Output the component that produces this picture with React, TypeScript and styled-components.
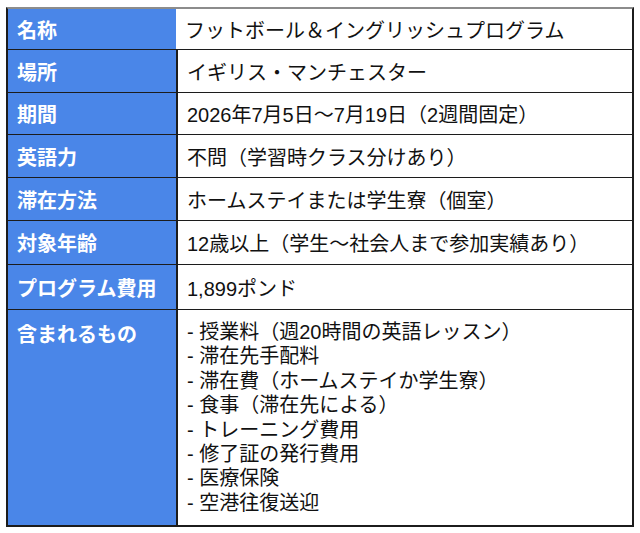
import styled, { createGlobalStyle } from "styled-components";

const GlobalStyle = createGlobalStyle`
  html, body {
    margin: 0;
    padding: 0;
    background: #ffffff;
  }
  body {
    font-family: "Liberation Sans", "Noto Sans CJK JP", sans-serif;
    color: #111111;
  }
`;

const Sheet = styled.div`
  box-sizing: border-box;
  width: 628px;
  margin: 7px 0 0 6px;
  border: 2px solid #1c1c1c;
  border-top-color: #8c8c8c;
`;

const Row = styled.div<{ $height?: number; $first?: boolean }>`
  display: grid;
  grid-template-columns: 168px 1fr;
  min-height: ${(p) => (p.$height ? `${p.$height}px` : "auto")};
  border-top: ${(p) => (p.$first ? "none" : "1px solid #1c1c1c")};
`;

const HeadCell = styled.div<{ $top?: boolean }>`
  display: flex;
  align-items: ${(p) => (p.$top ? "flex-start" : "center")};
  padding: ${(p) => (p.$top ? "9px 9px 0" : "0 9px")};
  background: #4a86e8;
  color: #ffffff;
  font-size: 20px;
  font-weight: 700;
  letter-spacing: 0;
`;

const ValueCell = styled.div<{ $first?: boolean; $top?: boolean }>`
  display: flex;
  align-items: ${(p) => (p.$top ? "flex-start" : "center")};
  padding: ${(p) => (p.$top ? "10px 9px" : "0 9px")};
  border-left: ${(p) => (p.$first ? "none" : "2px solid #1c1c1c")};
  font-size: 20px;
  color: #111111;
`;

const List = styled.ul`
  margin: 0;
  padding: 0;
  list-style: none;
  line-height: 24.4px;
`;

const rows: { label: string; value: string; height: number }[] = [
  { label: "名称", value: "フットボール＆イングリッシュプログラム", height: 40 },
  { label: "場所", value: "イギリス・マンチェスター", height: 42 },
  { label: "期間", value: "2026年7月5日〜7月19日（2週間固定）", height: 41 },
  { label: "英語力", value: "不問（学習時クラス分けあり）", height: 42 },
  { label: "滞在方法", value: "ホームステイまたは学生寮（個室）", height: 42 },
  { label: "対象年齢", value: "12歳以上（学生〜社会人まで参加実績あり）", height: 43 },
  { label: "プログラム費用", value: "1,899ポンド", height: 44 },
];

const included = [
  "授業料（週20時間の英語レッスン）",
  "滞在先手配料",
  "滞在費（ホームステイか学生寮）",
  "食事（滞在先による）",
  "トレーニング費用",
  "修了証の発行費用",
  "医療保険",
  "空港往復送迎",
];

export default function App() {
  return (
    <>
      <GlobalStyle />
      <Sheet>
        {rows.map((r, i) => (
          <Row key={r.label} $height={r.height} $first={i === 0}>
            <HeadCell>{r.label}</HeadCell>
            <ValueCell $first={i === 0}>{r.value}</ValueCell>
          </Row>
        ))}
        <Row $height={214}>
          <HeadCell $top>含まれるもの</HeadCell>
          <ValueCell $top>
            <List>
              {included.map((item) => (
                <li key={item}>- {item}</li>
              ))}
            </List>
          </ValueCell>
        </Row>
      </Sheet>
    </>
  );
}
